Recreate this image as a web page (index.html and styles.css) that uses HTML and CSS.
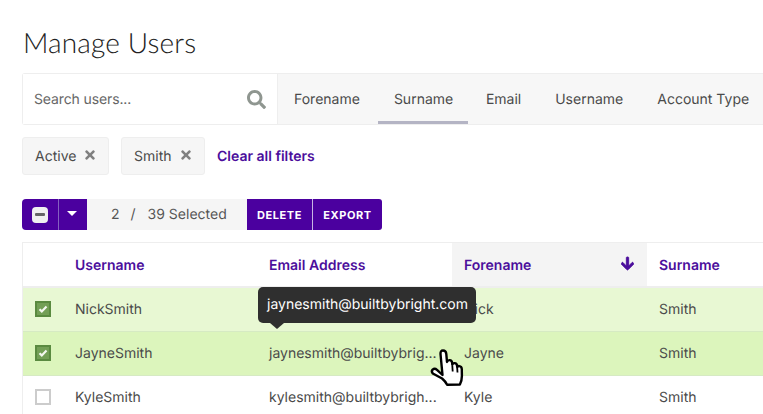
FILE: index.html
```html
<!DOCTYPE html>
<html lang="en">
<head>
<meta charset="utf-8">
<title>Manage Users</title>
<link rel="stylesheet" href="styles.css">
</head>
<body>
<main class="page">
  <h1 class="title">Manage Users</h1>

  <div class="searchbar">
    <div class="search">
      <span class="search-text">Search users...</span>
      <svg class="search-icon" viewBox="0 0 512 512"><path d="M505 442.7L405.3 343c-4.5-4.5-10.6-7-17-7H372c27.6-35.3 44-79.7 44-128C416 93.1 322.9 0 208 0S0 93.1 0 208s93.1 208 208 208c48.3 0 92.7-16.4 128-44v16.3c0 6.4 2.5 12.5 7 17l99.7 99.7c9.4 9.4 24.6 9.4 33.9 0l28.3-28.3c9.4-9.4 9.4-24.6.1-34zM208 336c-70.7 0-128-57.2-128-128 0-70.7 57.2-128 128-128 70.7 0 128 57.2 128 128 0 70.7-57.2 128-128 128z"/></svg>
    </div>
    <nav class="tabs">
      <span class="tab">Forename</span>
      <span class="tab tab-active">Surname</span>
      <span class="tab">Email</span>
      <span class="tab">Username</span>
      <span class="tab">Account Type</span>
    </nav>
  </div>

  <div class="filters">
    <span class="chip chip-active">Active <svg class="chip-x" viewBox="0 0 352 512"><path d="M242.72 256l100.07-100.07c12.28-12.28 12.28-32.19 0-44.48l-22.24-22.24c-12.28-12.28-32.19-12.28-44.48 0L176 189.28 75.93 89.21c-12.28-12.28-32.19-12.28-44.48 0L9.21 111.45c-12.28 12.28-12.28 32.19 0 44.48L109.28 256 9.21 356.07c-12.28 12.28-12.28 32.19 0 44.48l22.24 22.24c12.28 12.28 32.2 12.28 44.48 0L176 322.72l100.07 100.07c12.28 12.28 32.2 12.28 44.48 0l22.24-22.24c12.28-12.28 12.28-32.19 0-44.48L242.72 256z"/></svg></span>
    <span class="chip chip-smith">Smith <svg class="chip-x" viewBox="0 0 352 512"><path d="M242.72 256l100.07-100.07c12.28-12.28 12.28-32.19 0-44.48l-22.24-22.24c-12.28-12.28-32.19-12.28-44.48 0L176 189.28 75.93 89.21c-12.28-12.28-32.19-12.28-44.48 0L9.21 111.45c-12.28 12.28-12.28 32.19 0 44.48L109.28 256 9.21 356.07c-12.28 12.28-12.28 32.19 0 44.48l22.24 22.24c12.28 12.28 32.2 12.28 44.48 0L176 322.72l100.07 100.07c12.28 12.28 32.2 12.28 44.48 0l22.24-22.24c12.28-12.28 12.28-32.19 0-44.48L242.72 256z"/></svg></span>
    <a class="clear">Clear all filters</a>
  </div>

  <div class="toolbar">
    <div class="select-group">
      <span class="select-cell"><span class="minus-box"><span class="minus-bar"></span></span></span>
      <span class="caret-cell"><span class="caret"></span></span>
    </div>
    <div class="count"><span>2</span><span class="slash">/</span><span>39 Selected</span></div>
    <button class="action">DELETE</button>
    <button class="action action-last">EXPORT</button>
  </div>

  <div class="table">
    <div class="row head">
      <div class="cell check"></div>
      <div class="cell">Username</div>
      <div class="cell">Email Address</div>
      <div class="cell sorted">Forename
        <svg class="sort-arrow" viewBox="0 0 448 512"><path d="M413.1 222.5l22.2 22.2c9.4 9.4 9.4 24.6 0 33.9L241 473c-9.4 9.4-24.6 9.4-33.9 0L12.7 278.6c-9.4-9.4-9.4-24.6 0-33.9l22.2-22.2c9.5-9.5 25-9.3 34.3.4L184 343.4V56c0-13.3 10.7-24 24-24h32c13.3 0 24 10.7 24 24v287.4l114.8-120.5c9.3-9.8 24.8-10 34.3-.4z"/></svg>
      </div>
      <div class="cell">Surname</div>
    </div>
    <div class="row selected">
      <div class="cell check"><span class="box box-on"><svg class="tick" viewBox="0 0 12 12"><path d="M2.500 6.200l2.300 2.200 4.700-4.800"/></svg></span></div>
      <div class="cell">NickSmith</div>
      <div class="cell"></div>
      <div class="cell">Nick</div>
      <div class="cell">Smith</div>
    </div>
    <div class="row selected hovered">
      <div class="cell check"><span class="box box-on"><svg class="tick" viewBox="0 0 12 12"><path d="M2.500 6.200l2.300 2.200 4.700-4.800"/></svg></span></div>
      <div class="cell">JayneSmith</div>
      <div class="cell">jaynesmith@builtbybrig...</div>
      <div class="cell">Jayne</div>
      <div class="cell">Smith</div>
    </div>
    <div class="row">
      <div class="cell check"><span class="box"></span></div>
      <div class="cell">KyleSmith</div>
      <div class="cell">kylesmith@builtbybrigh...</div>
      <div class="cell">Kyle</div>
      <div class="cell">Smith</div>
    </div>
    <div class="tooltip">jaynesmith@builtbybright.com</div>
    <svg class="hand" viewBox="0 0 38 42">
      <path class="hand-fill" d="M12.500 6q-.2-3.500 2.500-3.500q3 0 3.300 3.500l.7 8q.6-2 2.600-1.900q2.300.1 2.500 2.600l.2 2q.5-1.700 2.300-1.600q2.300.1 2.500 2.700l.1 1.300q.6-1.200 2.100-1q2.400.3 2.500 3.200l.1 6.700q0 4.500-2 8.500l-12.800.2q-1.800-3.500-5-6.200L4.800 25.500q-1.800-2.200-.2-3.900q2.100-1.800 4.400.2L14.500 27z"/>
      <path class="hand-line" d="M24.300 17.500l.4 6M29.200 20l.3 4.500"/>
    </svg>
  </div>
</main>
</body>
</html>
```
FILE: styles.css
```css
* { box-sizing: border-box; }
html, body { margin: 0; height: 100%; overflow: hidden; background: #fff; }
body { font-family: Inter, "Liberation Sans", sans-serif; font-size: 14px; color: #4a4a4a; text-rendering: geometricPrecision; }
.page { padding: 22px 0 0 22px; width: 763px; overflow: hidden; height: 414px; }
.title { margin: 0; font-family: Lato, sans-serif; font-weight: 300; font-size: 28px; line-height: 40px; height: 51px; color: #222; letter-spacing: .15px; padding-left: 1px; }
.searchbar { display: flex; height: 52px; width: 760px; border: 1px solid #eee; border-right: 0; border-radius: 3px 0 0 3px; background: #f7f7f7; }
.search { width: 255px; flex: none; display: flex; align-items: center; justify-content: space-between; padding: 0 11px 0 11px; background: #fff; border-right: 1px solid #eee; }
.search-text { color: #666; letter-spacing: -.12px; }
.search-icon { width: 19px; height: 19px; fill: #8f9690; }
.tabs { display: flex; gap: 2px; }
.tab { display: flex; align-items: center; padding: 0 16px; height: 50px; white-space: nowrap; border-bottom: 3px solid transparent; padding-top: 3px; }
.tab-active { border-bottom-color: #b4b4c4; width: 90px; }
.filters { display: flex; align-items: center; margin-top: 12px; height: 38px; }
.chip { display: flex; align-items: center; justify-content: space-between; height: 38px; padding: 0 13px 0 12px; background: #f6f6f6; border: 1px solid #eee; border-radius: 3px; }
.chip-active { width: 87px; margin-right: 12px; }
.chip-smith { width: 84px; margin-right: 12px; }
.chip-x { width: 10px; height: 14px; fill: #808080; flex: none; margin-top: -2px; }
.clear { color: #4b0e9c; font-weight: 600; font-size: 14px; }
.toolbar { display: flex; height: 31px; margin-top: 24px; }
.select-group { display: flex; width: 65px; background: #4b009f; border-radius: 4px 0 0 4px; }
.select-cell { width: 37px; display: flex; align-items: center; justify-content: center; border-right: 1px solid #8560c0; }
.minus-box { width: 16px; height: 16px; background: #f1f1f1; border-radius: 4px; display: flex; align-items: center; justify-content: center; }
.minus-bar { width: 10px; height: 3px; background: #666; border-radius: 1px; }
.caret-cell { flex: 1; display: flex; align-items: center; justify-content: center; padding-right: 2px; }
.caret { width: 0; height: 0; border-left: 5px solid transparent; border-right: 5px solid transparent; border-top: 5px solid #fff; margin-top: -3px; }
.count { width: 160px; background: #f5f5f5; display: flex; align-items: center; padding: 0 0 1px 24px; color: #555; }
.slash { margin: 0 12px 0 11px; }
.action { width: 66px; border: 0; padding: 0; background: #4b009f; color: #fff; font: 700 11px Inter, sans-serif; letter-spacing: .55px; border-right: 1px solid #c8b4e4; text-rendering: geometricPrecision; }
.action-last { width: 69px; border-right: 0; border-radius: 0 3px 3px 0; }
.table { position: relative; margin-top: 12px; width: 760px; border-top: 1px solid #eee; border-left: 1px solid #eee; }
.row { display: grid; grid-template-columns: 40px 194px 195px 195px 195px; height: 44px; border-bottom: 1px solid #f0f0f0; }
.cell { display: flex; align-items: center; padding: 0 12px; white-space: nowrap; overflow: hidden; }
.head { height: 45px; border-bottom: 2px solid #eee; color: #4b0e9c; font-weight: 600; font-size: 14px; }
.head .cell { padding-top: 2px; }
.sorted { background: #f4f4f4; justify-content: space-between; }
.sort-arrow { width: 13px; height: 15px; fill: #4b0e9c; stroke: #4b0e9c; stroke-width: 30; margin-right: 1px; margin-top: -4px; }
.selected { background: #e8f8d3; border-bottom-color: #d6eac3; }
.hovered { background: #dcf5bc; }
.check { padding-left: 12px; }
.box { width: 16px; height: 16px; border: 2px solid #ccc; background: #fff; display: block; margin-top: -1px; }
.box-on { background: #739f56; border-color: #5a8a40; }
.tick { display: block; width: 12px; height: 12px; fill: none; stroke: #f4f8f0; stroke-width: 2.200; }
.tooltip { position: absolute; left: 235px; top: 44px; width: 218px; height: 36px; display: flex; align-items: center; justify-content: center; background: #2f2f2f; color: #fff; border-radius: 5px; font-size: 14px; padding-left: 1px; padding-bottom: 1px; }
.tooltip::after { content: ""; position: absolute; left: 12px; top: 36px; border-left: 7px solid transparent; border-right: 7px solid transparent; border-top: 6px solid #2f2f2f; }
.hand { position: absolute; left: 405px; top: 105px; width: 38px; height: 42px; }
.hand-fill { fill: #fff; stroke: #000; stroke-width: 2.400; stroke-linejoin: round; }
.hand-line { fill: none; stroke: #000; stroke-width: 1.800; }
```
